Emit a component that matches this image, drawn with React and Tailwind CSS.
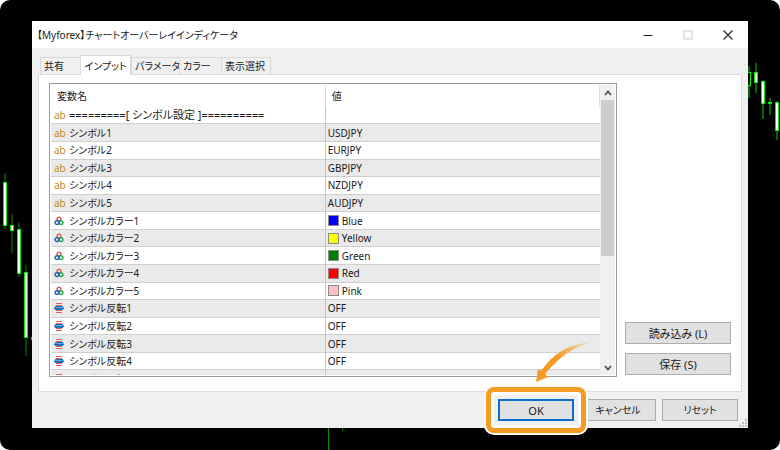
import { useState } from "react";

const tabs = [
  { label: "共有", width: "w-[40px]" },
  { label: "インプット", width: "w-[51px]" },
  { label: "パラメータ", width: "w-[48px]" },
  { label: "カラー", width: "w-[42px]" },
  { label: "表示選択", width: "w-[50px]" },
];

const rows = [
  { type: "text", name: "=========[ シンボル設定 ]==========", value: "", divider: true },
  { type: "text", name: "シンボル1", value: "USDJPY" },
  { type: "text", name: "シンボル2", value: "EURJPY" },
  { type: "text", name: "シンボル3", value: "GBPJPY" },
  { type: "text", name: "シンボル4", value: "NZDJPY" },
  { type: "text", name: "シンボル5", value: "AUDJPY" },
  { type: "color", name: "シンボルカラー1", value: "Blue", swatch: "bg-[#0000ff]" },
  { type: "color", name: "シンボルカラー2", value: "Yellow", swatch: "bg-[#ffff00]" },
  { type: "color", name: "シンボルカラー3", value: "Green", swatch: "bg-[#008000]" },
  { type: "color", name: "シンボルカラー4", value: "Red", swatch: "bg-[#ff0000]" },
  { type: "color", name: "シンボルカラー5", value: "Pink", swatch: "bg-[#ffc0cb]" },
  { type: "enum", name: "シンボル反転1", value: "OFF" },
  { type: "enum", name: "シンボル反転2", value: "OFF" },
  { type: "enum", name: "シンボル反転3", value: "OFF" },
  { type: "enum", name: "シンボル反転4", value: "OFF" },
  { type: "enum", name: "シンボル反転5", value: "OFF" },
];

// x, high, low, body top, body bottom, body fill
const leftCandles = [
  [5, 173, 229, 182, 226, "#fff"],
  [12, 214, 253, 225, 231, "#fff"],
  [19, 223, 277, 229, 274, "#fff"],
  [26, 265, 356, 272, 338, "#fff"],
];

const rightCandles = [
  [2, 66, 98, 72, 86, "#000"],
  [9, 63, 93, 72, 83, "#fff"],
  [16, 80, 119, 81, 104, "#fff"],
  [23, 98, 115, 102, 104, "#fff"],
  [30, 101, 140, 102, 131, "#fff"],
];

function Candles({ data, wick }) {
  return data.map(([x, high, low, top, bottom, fill]) => (
    <g key={x}>
      <rect x={x - 0.5} y={high} width="1" height={low - high} fill={wick} />
      <rect
        x={x - 1.5}
        y={top + 0.5}
        width="3"
        height={bottom - top - 1}
        fill={fill}
        stroke="#00f000"
      />
    </g>
  ));
}

function RowIcon({ type }) {
  if (type === "text") {
    return <span className="w-[10px] text-[10px] text-[#c08a1e]">ab</span>;
  }
  if (type === "color") {
    return (
      <svg width="10" height="10" viewBox="0 0 10 10" fill="none" strokeWidth="1.4">
        <circle cx="5" cy="3" r="1.9" stroke="#e2504c" />
        <circle cx="7" cy="6.6" r="1.9" stroke="#22a845" />
        <circle cx="3" cy="6.6" r="1.9" stroke="#1c62b0" />
      </svg>
    );
  }
  return (
    <svg width="10" height="10" viewBox="0 0 10 10">
      <path d="M2 .5h6M2 2.5h6M2 7.5h6M2 9.5h6" stroke="#e8605a" />
      <path d="M1 3.5h8M0 5.5h10M1 6.5h8" stroke="#1b6fb8" />
      <path d="M0 4.5h10" stroke="#5ba5de" />
    </svg>
  );
}

function WinButton({ children, className = "text-[11px]" }) {
  return (
    <button
      type="button"
      className={`h-[22px] border border-[#adadad] bg-[#e1e1e1] leading-none ${className}`}
    >
      {children}
    </button>
  );
}

function TitleBar() {
  return (
    <header className="flex h-[27px] shrink-0 items-center justify-between bg-white pl-[5px]">
      <h1 className="text-[10px] leading-none">【Myforex】チャートオーバーレイインディケータ</h1>
      <div className="flex h-full">
        <button type="button" aria-label="最小化" className="grid w-10 place-items-center">
          <svg width="10" height="10" viewBox="0 0 10 10">
            <path d="M.5 5.5h9" stroke="#222" />
          </svg>
        </button>
        <button type="button" aria-label="最大化" disabled className="grid w-10 place-items-center">
          <svg width="10" height="10" viewBox="0 0 10 10" fill="none">
            <rect x="1" y="1" width="8" height="8" stroke="#ccc" />
          </svg>
        </button>
        <button type="button" aria-label="閉じる" className="grid w-10 place-items-center">
          <svg width="10" height="10" viewBox="0 0 10 10">
            <path d="M.5.5l9 9M9.5.5l-9 9" stroke="#222" strokeWidth="1.1" />
          </svg>
        </button>
      </div>
    </header>
  );
}

function InputTable() {
  return (
    <div className="flex min-w-0 flex-1 border border-[#9a9ba3] bg-white p-px">
      <div className="h-0 min-h-full min-w-0 flex-1 overflow-hidden">
        <table className="h-[303px] w-full table-fixed border-collapse text-left text-[10px] leading-[14px]">
          <thead>
            <tr className="h-[22px]">
              <th className="w-1/2 border-r border-[#dcdcdc] py-0 pl-[6px] font-normal">変数名</th>
              <th className="border-r border-[#dcdcdc] py-0 pl-[6px] font-normal">値</th>
            </tr>
          </thead>
          <tbody>
            {rows.map((row) => (
              <tr key={row.name} className="border-b border-[#cfcfcf] odd:bg-white even:bg-[#eaeaea]">
                <td className="border-r border-[#c4c4c4] p-0 pl-[3px]">
                  <div className="flex items-center gap-[5px] whitespace-nowrap">
                    <RowIcon type={row.type} />
                    <span className={row.divider ? "text-[11px]" : ""}>{row.name}</span>
                  </div>
                </td>
                <td className="p-0 pl-[2px]">
                  <div className="flex items-center gap-[3px]">
                    {row.swatch && (
                      <span className={`size-[11px] border border-[#8c8c8c] ${row.swatch}`} />
                    )}
                    <span>{row.value}</span>
                  </div>
                </td>
              </tr>
            ))}
          </tbody>
        </table>
      </div>
      {/* Scrollbar */}
      <div className="flex w-[15px] flex-col bg-[#f0f0f0] px-px">
        <button type="button" aria-label="上へ" className="grid h-[15px] place-items-center">
          <svg width="8" height="6" viewBox="0 0 8 6" fill="none">
            <path d="M1 5l3-3.5L7 5" stroke="#444" strokeWidth="1.5" />
          </svg>
        </button>
        <div className="flex-1">
          <div className="h-3/5 bg-[#cdcdcd]" />
        </div>
        <button type="button" aria-label="下へ" className="grid h-[15px] place-items-center">
          <svg width="8" height="6" viewBox="0 0 8 6" fill="none">
            <path d="M1 1l3 3.5L7 1" stroke="#444" strokeWidth="1.5" />
          </svg>
        </button>
      </div>
    </div>
  );
}

export default function App() {
  const [active, setActive] = useState(1);

  return (
    <div className="bg-white">
      <main className="relative flex h-screen flex-col overflow-hidden rounded-[10px] bg-black px-8 pt-[21px] pb-[22px] font-['Noto_Sans','Noto_Sans_CJK_JP',sans-serif] text-[#1a1a1a] [font-feature-settings:'palt']">
        {/* Chart behind the dialog */}
        <svg className="absolute top-0 left-0" width="34" height="450">
          <Candles data={leftCandles} wick="#008a00" />
          <rect x="31" y="337" width="2" height="3" fill="#00e000" />
        </svg>
        <svg className="absolute top-0 right-0" width="33" height="450">
          <Candles data={rightCandles} wick="#00d000" />
        </svg>
        <svg className="absolute bottom-0 left-[320px]" width="30" height="22">
          <path d="M8.5 0v22M22.5 0v3" stroke="#009400" />
        </svg>

        <section className="relative flex flex-1 flex-col bg-[#f0f0f0]">
          <TitleBar />

          <div className="flex flex-1 flex-col px-[6px] pt-[7px]">
            <nav role="tablist" className="flex items-end pl-[2px]">
              {tabs.map((tab, i) => (
                <button
                  key={tab.label}
                  type="button"
                  role="tab"
                  aria-selected={active === i}
                  onClick={() => setActive(i)}
                  className={`border border-b-0 border-[#d9d9d9] text-[10px] leading-none whitespace-nowrap ${tab.width} ${
                    active === i
                      ? "relative -mb-px h-[20px] bg-white text-center"
                      : "h-[17px] border-r-0 pl-[3px] text-left last:border-r"
                  }`}
                >
                  {tab.label}
                </button>
              ))}
            </nav>

            <div className="flex flex-1 gap-2 border border-[#dcdcdc] bg-white px-[10px] pt-2 pb-[14px]">
              <InputTable />
              <div className="flex w-[106px] flex-col justify-end gap-[9px] pb-[2px]">
                <WinButton>読み込み (L)</WinButton>
                <WinButton>保存 (S)</WinButton>
              </div>
            </div>
          </div>

          <footer className="flex items-start justify-end gap-[6px] px-[10px] pt-[7px] pb-[7px]">
            <div className="relative flex">
              {/* Callout ring and arrow */}
              <div className="absolute -inset-x-[14px] -inset-y-[14px] rounded-[10px] bg-white p-[2px]">
                <div className="h-full rounded-[8px] border-[5px] border-[#f59a23] bg-white p-[3px]">
                  <div className="h-full bg-[#f0f0f0]" />
                </div>
              </div>
              <svg className="absolute -top-[59px] left-[36px]" width="64" height="44" viewBox="0 0 64 44">
                <defs>
                  <linearGradient id="fade" x1="0" y1="1" x2="1" y2="0">
                    <stop offset=".5" stopColor="#f59a23" />
                    <stop offset="1" stopColor="#f59a23" stopOpacity=".1" />
                  </linearGradient>
                </defs>
                <path
                  d="M2 42L4 29L7 31Q26 3 60 2Q33 7 11 34L14 37Z"
                  fill="url(#fade)"
                />
              </svg>
              <button
                type="button"
                className="relative h-[22px] w-[76px] border-2 border-[#0b6fd0] bg-[#e1e1e1] text-[11px] leading-none"
              >
                OK
              </button>
            </div>
            <WinButton className="w-[76px] text-[10px]">キャンセル</WinButton>
            <WinButton className="w-[76px] text-[10px]">リセット</WinButton>
          </footer>

          {/* Resize grip */}
          <svg className="absolute right-px bottom-px" width="8" height="8" viewBox="0 0 8 8">
            <path
              d="M6 0h2v2h-2zM6 3h2v2h-2zM3 3h2v2h-2zM6 6h2v2h-2zM3 6h2v2h-2zM0 6h2v2h-2z"
              fill="#bfbfbf"
            />
          </svg>
        </section>
      </main>
    </div>
  );
}
